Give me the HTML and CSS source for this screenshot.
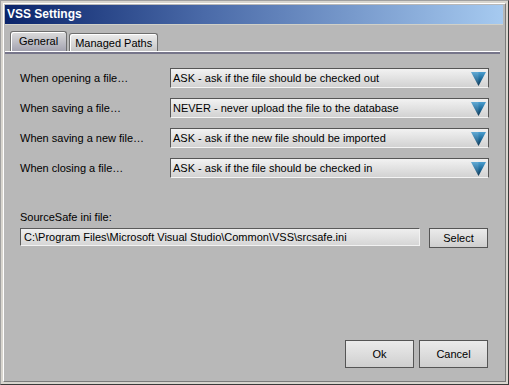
FILE: index.html
```html
<!DOCTYPE html>
<html lang="en">
<head>
  <meta charset="UTF-8">
  <title>VSS Settings</title>
  <link rel="stylesheet" href="styles.css">
</head>
<body>

  <div class="window">
    <div class="client">

      <!-- title bar -->
      <div class="titlebar">VSS Settings</div>

      <!-- tabs -->
      <div class="tabs">
        <div class="tab active">General</div>
        <div class="tab">Managed Paths</div>
      </div>
      <div class="tab-line"></div>

      <div class="panel">
        <div class="rows">
          <div class="row">
            <span class="label">When opening a file…</span>
            <div class="combo">
              <span>ASK - ask if the file should be checked out</span>
              <svg class="arrow" width="15" height="14" viewBox="0 0 15 14"><use href="#tri"/></svg>
            </div>
          </div>
          <div class="row">
            <span class="label">When saving a file…</span>
            <div class="combo">
              <span>NEVER - never upload the file to the database</span>
              <svg class="arrow" width="15" height="14" viewBox="0 0 15 14"><use href="#tri"/></svg>
            </div>
          </div>
          <div class="row">
            <span class="label">When saving a new file…</span>
            <div class="combo">
              <span>ASK - ask if the new file should be imported</span>
              <svg class="arrow" width="15" height="14" viewBox="0 0 15 14"><use href="#tri"/></svg>
            </div>
          </div>
          <div class="row">
            <span class="label">When closing a file…</span>
            <div class="combo">
              <span>ASK - ask if the file should be checked in</span>
              <svg class="arrow" width="15" height="14" viewBox="0 0 15 14"><use href="#tri"/></svg>
            </div>
          </div>
        </div>

        <div class="ini-label">SourceSafe ini file:</div>
        <div class="ini-row">
          <div class="textbox">C:\Program Files\Microsoft Visual Studio\Common\VSS\srcsafe.ini</div>
          <div class="btn btn-select">Select</div>
        </div>

        <div class="footer">
          <div class="btn btn-big">Ok</div>
          <div class="btn btn-big">Cancel</div>
        </div>
      </div>

    </div>
  </div>

  <!-- arrow shape shared by the combos -->
  <svg width="0" height="0" style="position:absolute">
    <defs>
      <linearGradient id="triFill" x1="0" y1="0" x2="0" y2="1">
        <stop offset="0" stop-color="#4c9fd0"/>
        <stop offset="0.55" stop-color="#1a6594"/>
        <stop offset="1" stop-color="#062c48"/>
      </linearGradient>
      <symbol id="tri" viewBox="0 0 15 14">
        <polygon points="0,0 15,0 7.5,14" fill="url(#triFill)"/>
        <polygon points="0,0 7.5,0 7.5,14" fill="#ffffff" opacity="0.12"/>
      </symbol>
    </defs>
  </svg>

</body>
</html>
```

FILE: styles.css
```css
html, body {
  margin: 0;
  padding: 0;
  width: 509px;
  height: 385px;
  overflow: hidden;
  font-family: "Liberation Sans", Arial, sans-serif;
  font-size: 11px;
  color: #000;
}

.window {
  width: 509px;
  height: 385px;
  box-sizing: border-box;
  border: 1px solid;
  border-color: #a0a0a0 #3a3a3a #3a3a3a #a0a0a0;
  background: #d8d5ce;
  padding: 2px;
}

.client {
  height: 100%;
  box-sizing: border-box;
  border: 1px solid;
  border-color: #ffffff #7a7a7a #7a7a7a #ffffff;
  background: #b8b8b8;
  padding: 1px 2px 1px 1px;
  display: flex;
  flex-direction: column;
}

.titlebar {
  height: 19px;
  line-height: 19px;
  padding-left: 2px;
  color: #fff;
  font-weight: bold;
  font-size: 12px;
  background: linear-gradient(to right, #0a246a 0%, #4a6aa8 40%, #a6caf0 100%);
  border-bottom: 1px solid #d0d0c8;
}

.tabs {
  display: flex;
  align-items: flex-end;
  gap: 2px;
  margin-top: 6px;
  padding-left: 5px;
  height: 20px;
}

.tab {
  height: 18px;
  line-height: 18px;
  padding: 0 5px;
  box-sizing: border-box;
  border: 1px solid #6e6e6e;
  border-bottom: none;
  border-radius: 3px 3px 0 0;
  background: linear-gradient(to bottom, #ececec, #c6c6c6);
  box-shadow: inset 1px 1px 0 #ffffff;
}

.tab.active {
  height: 20px;
  line-height: 19px;
  padding: 0 8px;
  background: linear-gradient(to bottom, #dcdcdc, #a4a3b0);
}

.tab-line {
  height: 2px;
  margin-right: 3px;
  border-top: 1px solid #ffffff;
  background: #76758a;
}

.panel {
  flex: 1;
  display: flex;
  flex-direction: column;
  padding: 14px 14px 12px 15px;
}

.rows {
  display: flex;
  flex-direction: column;
  gap: 10px;
}

.row {
  display: flex;
  align-items: center;
}

.label {
  width: 150px;
}

.combo {
  flex: 1;
  height: 20px;
  box-sizing: border-box;
  border: 1px solid #565656;
  border-bottom-color: #f4f4f4;
  background: linear-gradient(to bottom, #f2f2f2, #d2d2d2);
  display: flex;
  align-items: center;
  justify-content: space-between;
  padding: 0 2px 0 2px;
}

.arrow {
  margin-top: 1px;
}

.ini-label {
  margin-top: 33px;
}

.ini-row {
  display: flex;
  align-items: flex-start;
  margin-top: 5px;
}

.textbox {
  width: 400px;
  height: 18px;
  line-height: 16px;
  box-sizing: border-box;
  border: 1px solid #5a5a5a;
  border-color: #5a5a5a #f2f2f2 #f2f2f2 #5a5a5a;
  background: linear-gradient(to bottom, #efefef, #d6d6d6);
  padding-left: 3px;
}

.btn {
  box-sizing: border-box;
  border: 1px solid #555;
  background: linear-gradient(to bottom, #ebebeb, #cfcfcf);
  display: flex;
  align-items: center;
  justify-content: center;
}

.btn-select {
  width: 59px;
  height: 20px;
  margin-left: 9px;
}

.footer {
  margin-top: auto;
  display: flex;
  justify-content: flex-end;
  gap: 5px;
  padding-right: 1px;
}

.btn-big {
  width: 69px;
  height: 28px;
}
```
